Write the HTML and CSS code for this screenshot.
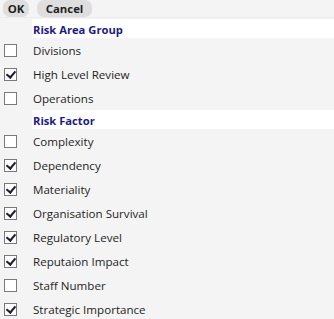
FILE: index.html
```html
<!DOCTYPE html>
<html lang="en">
<head>
    <meta charset="UTF-8">
    <title>Risk Filter</title>
    <link rel="stylesheet" href="styles.css">
</head>
<body>
    <div class="toolbar">
        <button class="btn">OK</button>
        <button class="btn">Cancel</button>
    </div>

    <div class="list">
        <div class="group-row">
            <div class="check-cell"></div>
            <div class="group-title">Risk Area Group</div>
        </div>
        <div class="item-row">
            <div class="check-cell"><span class="box"></span></div>
            <div class="label">Divisions</div>
        </div>
        <div class="item-row">
            <div class="check-cell"><span class="box checked"></span></div>
            <div class="label">High Level Review</div>
        </div>
        <div class="item-row">
            <div class="check-cell"><span class="box"></span></div>
            <div class="label">Operations</div>
        </div>

        <div class="group-row">
            <div class="check-cell"></div>
            <div class="group-title">Risk Factor</div>
        </div>
        <div class="item-row">
            <div class="check-cell"><span class="box"></span></div>
            <div class="label">Complexity</div>
        </div>
        <div class="item-row">
            <div class="check-cell"><span class="box checked"></span></div>
            <div class="label">Dependency</div>
        </div>
        <div class="item-row">
            <div class="check-cell"><span class="box checked"></span></div>
            <div class="label">Materiality</div>
        </div>
        <div class="item-row">
            <div class="check-cell"><span class="box checked"></span></div>
            <div class="label">Organisation Survival</div>
        </div>
        <div class="item-row">
            <div class="check-cell"><span class="box checked"></span></div>
            <div class="label">Regulatory Level</div>
        </div>
        <div class="item-row">
            <div class="check-cell"><span class="box checked"></span></div>
            <div class="label">Reputaion Impact</div>
        </div>
        <div class="item-row">
            <div class="check-cell"><span class="box"></span></div>
            <div class="label">Staff Number</div>
        </div>
        <div class="item-row">
            <div class="check-cell"><span class="box checked"></span></div>
            <div class="label">Strategic Importance</div>
        </div>
    </div>
</body>
</html>
```

FILE: styles.css
```css
body {
    font-family: 'Open Sans', 'Liberation Sans', sans-serif;
    font-size: 11.6px;
    margin: 0;
    background-color: #f4f4f4;
    color: #1a1a1a;
}
.toolbar {
    display: flex;
    gap: 8px;
    height: 17px;
    padding-left: 3px;
    border-bottom: 1px solid #ebebeb;
    margin-bottom: 1px;
}
.btn {
    font-family: inherit;
    font-size: 11.4px;
    font-weight: 700;
    color: #222;
    background-color: #dedede;
    border: none;
    border-radius: 7px;
    height: 17px;
    line-height: 17px;
    padding: 0;
}
.btn:first-child {
    width: 26px;
}
.btn:last-child {
    width: 55px;
}
.group-row {
    display: flex;
    height: 19px;
}
.group-title {
    flex: 1;
    background-color: #ffffff;
    color: #1c1c84;
    font-size: 11.2px;
    font-weight: 700;
    line-height: 21px;
    padding-left: 1px;
}
.check-cell {
    width: 32px;
    display: flex;
    align-items: center;
    padding-left: 4px;
    box-sizing: border-box;
}
.item-row {
    display: flex;
    height: 24px;
    align-items: center;
}
.label {
    padding-left: 1px;
    color: #1f1f1f;
}
.box {
    width: 11px;
    height: 11px;
    border: 1px solid #7a7a7a;
    background-color: #ffffff;
    position: relative;
}
.box.checked::after {
    content: "";
    position: absolute;
    left: 3px;
    top: 0px;
    width: 4px;
    height: 7px;
    border: solid #1a1a3a;
    border-width: 0 2px 2px 0;
    transform: rotate(40deg);
}
```
